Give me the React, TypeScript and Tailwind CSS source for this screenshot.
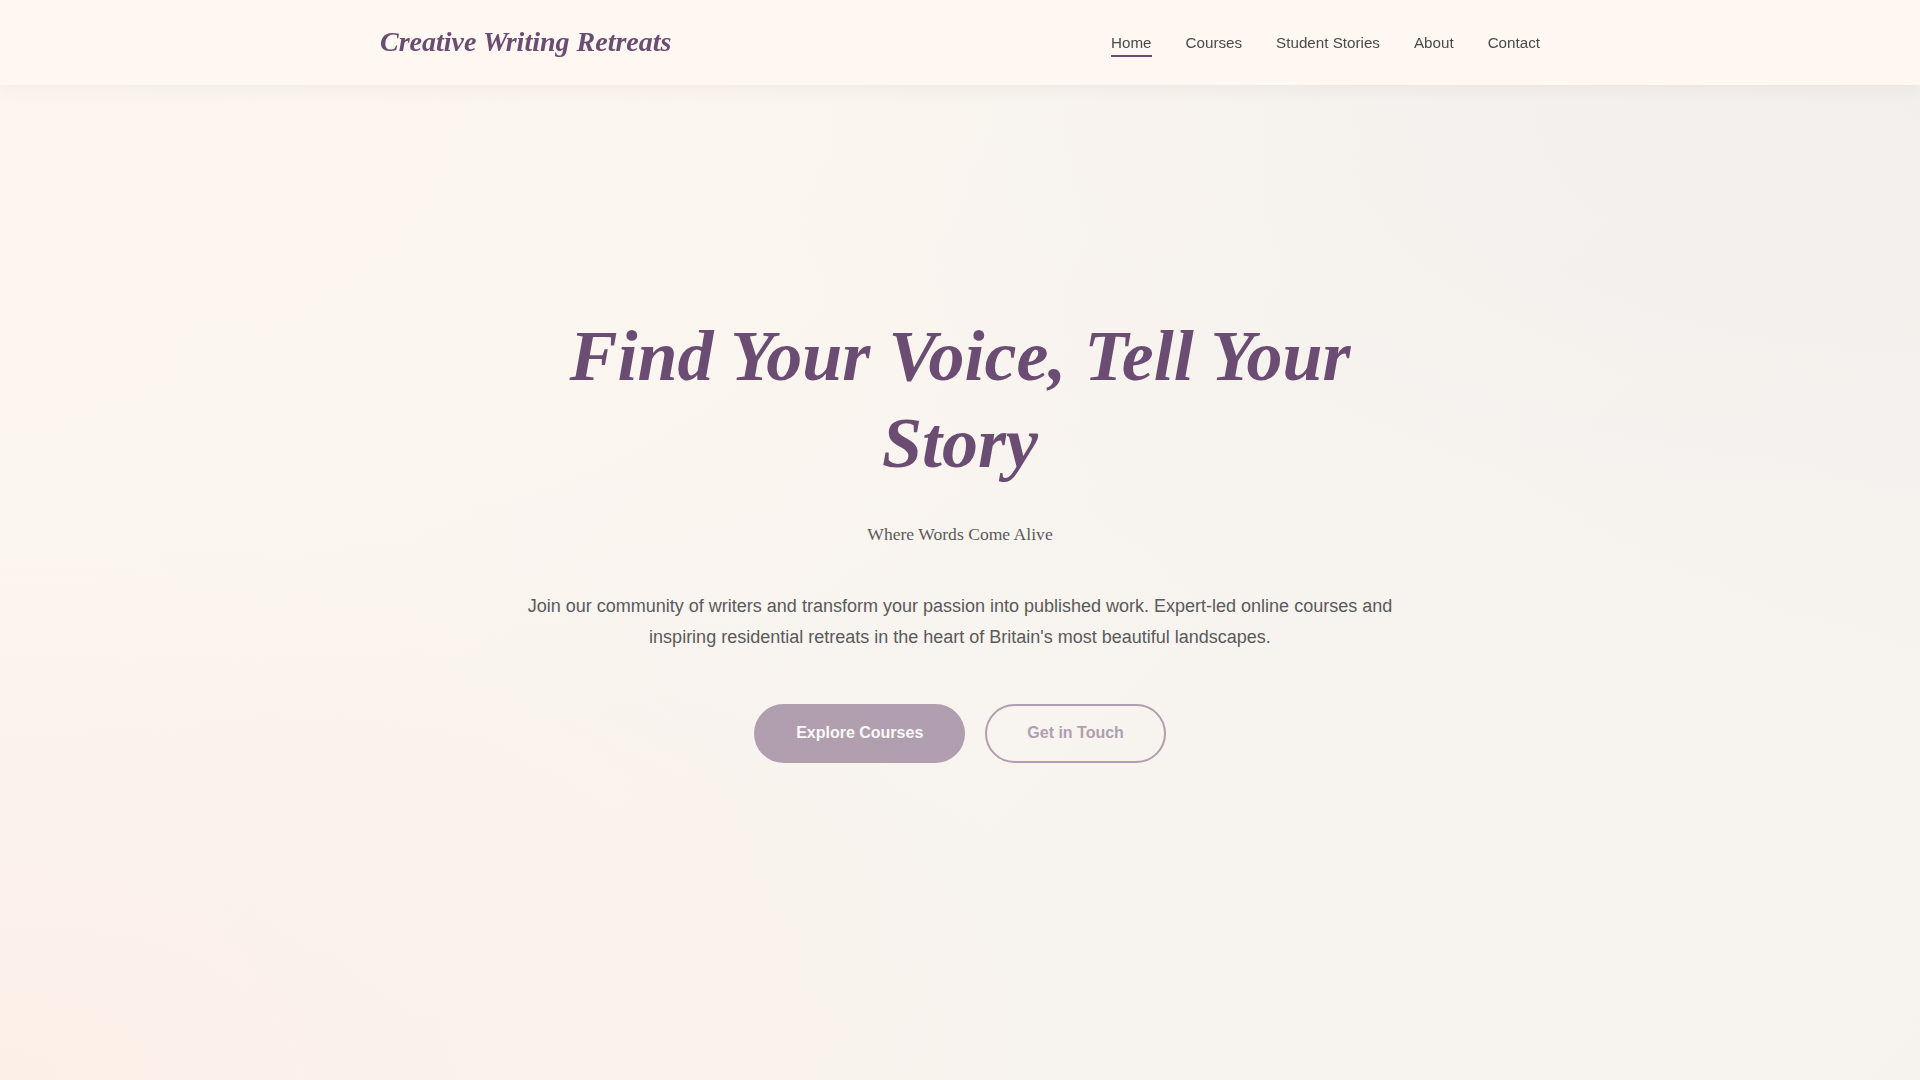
const navLinks = ["Home", "Courses", "Student Stories", "About", "Contact"];

function Header() {
  return (
    <header className="fixed top-0 inset-x-0 z-10 bg-[#fff7f2] shadow-[0_2px_18px_rgba(90,60,40,0.07)]">
      <div className="max-w-[1200px] mx-auto px-5 h-[85px] flex items-center justify-between">
        <a
          href="#"
          className="text-[28px] font-bold italic text-[#6b4c72] font-['Liberation_Serif',Georgia,serif] -mt-[1px]"
        >
          Creative Writing Retreats
        </a>
        <nav className="flex items-center gap-[34px] mt-[4px] font-['Liberation_Sans',Arial,sans-serif] text-[15.2px] text-[#4a4a4a]">
          {navLinks.map((link, i) => (
            <a
              key={link}
              href="#"
              className={i === 0 ? "border-b-2 border-[#6b4c72]" : "border-b-2 border-transparent"}
            >
              {link}
            </a>
          ))}
        </nav>
      </div>
    </header>
  );
}

function Hero() {
  return (
    <section className="min-h-screen flex items-center justify-center pb-[4px] px-5 text-center">
      <div className="max-w-[900px] flex flex-col items-center">
        <h1 className="text-[72px] leading-[1.2] font-bold italic text-[#6b4c72] font-['Liberation_Serif',Georgia,serif] mb-[35px]">
          Find Your Voice, Tell Your Story
        </h1>
        <p className="text-[17.6px] leading-[1.5] text-[#5a5a5a] font-['Liberation_Serif',Georgia,serif] mb-[43px]">
          Where Words Come Alive
        </p>
        <p className="text-[18px] leading-[1.75] text-[#5a5a5a] font-['Liberation_Sans',Arial,sans-serif] mb-[50px]">
          Join our community of writers and transform your passion into published work. Expert-led online
          courses and inspiring residential retreats in the heart of Britain's most beautiful landscapes.
        </p>
        <div className="flex gap-5 opacity-50 font-['Liberation_Sans',Arial,sans-serif] text-base font-bold">
          <a
            href="#"
            className="px-10 py-[15.5px] rounded-full border-2 border-[#6b4c72] bg-[#6b4c72] text-white"
          >
            Explore Courses
          </a>
          <a
            href="#"
            className="px-10 py-[15.5px] rounded-full border-2 border-[#6b4c72] text-[#6b4c72]"
          >
            Get in Touch
          </a>
        </div>
      </div>
    </section>
  );
}

export default function App() {
  return (
    <div className="min-h-screen bg-[radial-gradient(ellipse_at_0%_15%,#fdf6f0,transparent_50%),radial-gradient(ellipse_at_0%_100%,#fcefe8,transparent_40%),radial-gradient(ellipse_at_100%_10%,#f3efec,transparent_45%),linear-gradient(135deg,#fbf6f1,#f6f2ee)]">
      <Header />
      <Hero />
    </div>
  );
}
